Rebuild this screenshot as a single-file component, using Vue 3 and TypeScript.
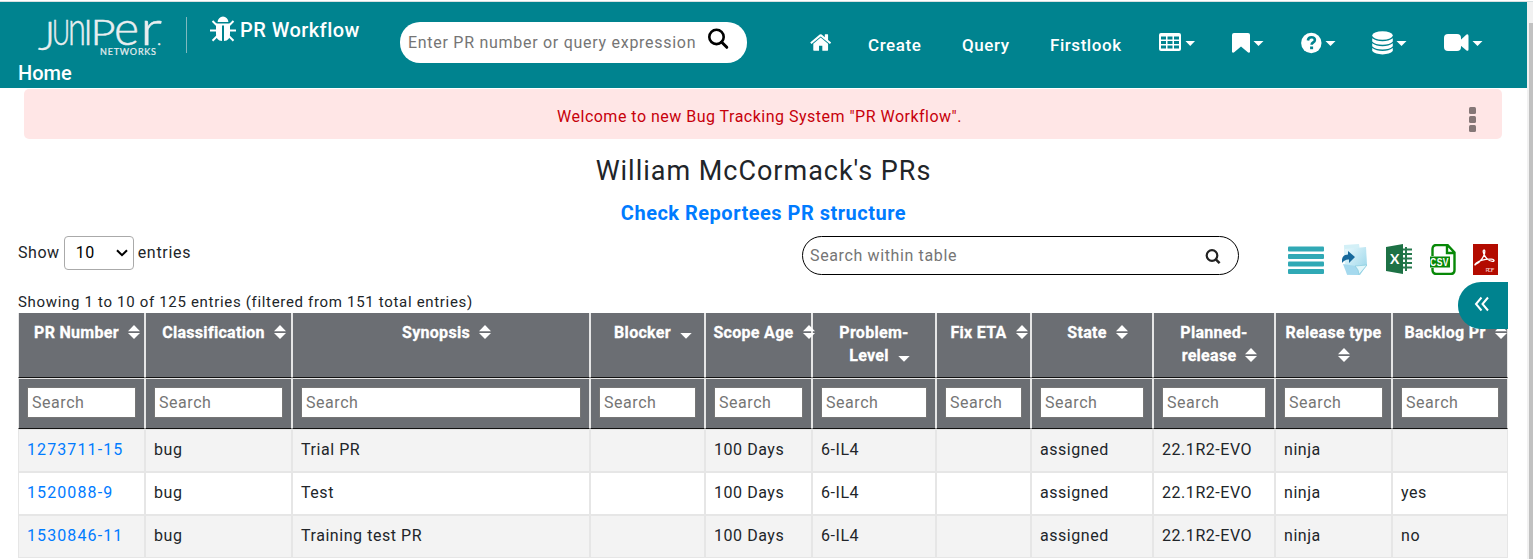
<script setup lang="ts">
interface Column {
  lines: string[]
  width: number
  sort: 'both' | 'desc'
}

interface PrRow {
  id: string
  cells: string[]
}

const columns: Column[] = [
  { lines: ['PR Number'], width: 127, sort: 'both' },
  { lines: ['Classification'], width: 147, sort: 'both' },
  { lines: ['Synopsis'], width: 298, sort: 'both' },
  { lines: ['Blocker'], width: 115, sort: 'desc' },
  { lines: ['Scope Age'], width: 107, sort: 'both' },
  { lines: ['Problem-', 'Level'], width: 124, sort: 'desc' },
  { lines: ['Fix ETA'], width: 95, sort: 'both' },
  { lines: ['State'], width: 122, sort: 'both' },
  { lines: ['Planned-', 'release'], width: 122, sort: 'both' },
  { lines: ['Release type', ''], width: 117, sort: 'both' },
  { lines: ['Backlog Pr'], width: 116, sort: 'both' },
]

const rows: PrRow[] = [
  { id: '1273711-15', cells: ['bug', 'Trial PR', '', '100 Days', '6-IL4', '', 'assigned', '22.1R2-EVO', 'ninja', ''] },
  { id: '1520088-9', cells: ['bug', 'Test', '', '100 Days', '6-IL4', '', 'assigned', '22.1R2-EVO', 'ninja', 'yes'] },
  { id: '1530846-11', cells: ['bug', 'Training test PR', '', '100 Days', '6-IL4', '', 'assigned', '22.1R2-EVO', 'ninja', 'no'] },
]
</script>

<template>
  <div class="page">
    <div class="main">
      <header class="header">
        <div class="bar">
          <svg class="logo" width="130" height="42" viewBox="0 0 130 42">
            <g fill="#e9eef0" stroke="#e9eef0" stroke-width=".5" font-family="Lato, sans-serif" font-weight="300">
              <text x="-1" y="36" font-size="40" textLength="17" lengthAdjust="spacingAndGlyphs">J</text>
              <text x="13" y="31" font-size="35" textLength="18" lengthAdjust="spacingAndGlyphs">U</text>
              <text x="29" y="31" font-size="48" textLength="18" lengthAdjust="spacingAndGlyphs">n</text>
              <text x="44.500" y="31" font-size="35">I</text>
              <text x="51.500" y="31" font-size="35" textLength="25" lengthAdjust="spacingAndGlyphs">P</text>
              <text x="75" y="31" font-size="47" textLength="25" lengthAdjust="spacingAndGlyphs">e</text>
              <text x="101" y="31" font-size="48" textLength="22" lengthAdjust="spacingAndGlyphs">r</text>
              <text x="118" y="31" font-size="18">.</text>
              <text x="61" y="40.500" font-size="9" stroke-width=".2" font-weight="400" textLength="56">NETWORKS</text>
            </g>
          </svg>
          <span class="divider"></span>
          <svg class="bug" width="26" height="26" viewBox="0 0 26 26">
            <path d="M7.600 6a5.400 5.400 0 0 1 10.800 0z" fill="#fff" />
            <path d="M6 7.500h14v10.500q0 6.500-6 7V9.500h-2V25q-6-.5-6-7z" fill="#fff" />
            <path d="M2.500 5l4.500 4.500M23.500 5L19 9.500M0 14.500h7M26 14.500h-7M2.500 24.800l5-5M23.500 24.800l-5-5" fill="none" stroke="#fff" stroke-width="2" />
          </svg>
          <span class="product">PR Workflow</span>
          <div class="search">
            <span class="search-text">Enter PR number or query expression</span>
            <svg class="search-icon" width="22" height="22" viewBox="0 0 22 22" fill="none" stroke="#000">
              <circle cx="9.500" cy="8.900" r="7.200" stroke-width="2.600" />
              <path d="M14.500 14l5.300 5.300" stroke-width="3" stroke-linecap="round" />
            </svg>
          </div>
          <nav class="nav">
            <svg width="23" height="23" viewBox="0 0 1792 1792" class="home-icon">
              <path fill="#fff" d="M1408 992v480q0 26-19 45t-45 19h-384v-384h-256v384h-384q-26 0-45-19t-19-45v-480q0-1 .5-3t.5-3l575-474 575 474q1 2 1 6zm223-69l-62 74q-8 9-21 11h-3q-13 0-21-7l-692-577-692 577q-12 8-24 7-13-2-21-11l-62-74q-8-10-7-23.500t11-21.500l719-599q32-26 76-26t76 26l244 204v-195q0-14 9-23t23-9h192q14 0 23 9t9 23v408l219 182q10 8 11 21.500t-7 23.500z" />
            </svg>
            <a class="link">Create</a>
            <a class="link">Query</a>
            <a class="link">Firstlook</a>
            <span class="menu">
              <svg width="37" height="24" viewBox="0 0 37 24" fill="#fff">
                <path fill-rule="evenodd" d="M2 3h18q2 0 2 2v14q0 2-2 2H2q-2 0-2-2V5q0-2 2-2zM2 6.500v3h5v-3zM8.500 6.500v3h5v-3zM15 6.500v3h5v-3zM2 11v3h5v-3zM8.500 11v3h5v-3zM15 11v3h5v-3zM2 15.500v3h5v-3zM8.500 15.500v3h5v-3zM15 15.500v3h5v-3z" />
                <path d="M26.500 11h9.500l-4.750 5z" />
              </svg>
            </span>
            <span class="menu">
              <svg width="37" height="24" viewBox="0 0 37 24" fill="#fff">
                <path d="M2 3h14q2 0 2 2v17q-1 1.500-2.500 0L9 16.500 2.500 22q-1.500 1.500-2.500 0V5q0-2 2-2z" />
                <path d="M21.500 11h10l-5 5z" />
              </svg>
            </span>
            <span class="menu">
              <svg width="37" height="24" viewBox="0 0 37 24" fill="#fff">
                <circle cx="10.300" cy="13" r="10.200" />
                <path d="M6.900 10.500q.4-3.200 3.600-3.200 3.400 0 3.400 2.700 0 1.600-1.800 2.500-1.500.8-1.500 2.300" fill="none" stroke="#00838f" stroke-width="2.600" />
                <rect x="9.100" y="16.500" width="3" height="2.700" fill="#00838f" />
                <path d="M24.500 11h10l-5 5z" />
              </svg>
            </span>
            <span class="menu">
              <svg width="37" height="26" viewBox="0 0 37 26" fill="#fff">
                <ellipse cx="10.500" cy="5.500" rx="10.300" ry="4.200" />
                <path d="M.2 8.300q4 3 10.300 3t10.300-3v3.200q-3 3.300-10.300 3.300T.2 11.500zM.2 13.300q4 3 10.300 3t10.300-3v3q-3 3.300-10.300 3.300T.2 16.300zM.2 18.100q4 3 10.300 3t10.300-3v3q-3 3.300-10.300 3.300T.2 21.100z" />
                <path d="M24.500 11h10l-5 5z" />
              </svg>
            </span>
            <span class="menu">
              <svg width="39" height="24" viewBox="0 0 39 24" fill="#fff">
                <rect x="0" y="4" width="17" height="17" rx="4" />
                <path d="M16 10.500l6.500-6q2-.8 2 1.500v13.500q0 2-2 1L16 15z" />
                <path d="M28.500 11h10l-5 5z" />
              </svg>
            </span>
          </nav>
        </div>
        <div class="crumb">Home</div>
      </header>

      <div class="alert">
        <span class="alert-text">Welcome to new Bug Tracking System "PR Workflow".</span>
        <span class="dots"><i></i><i></i><i></i></span>
      </div>

      <h1 class="title">William McCormack's PRs</h1>
      <a class="structure">Check Reportees PR structure</a>

      <div class="tools">
        <div class="length">
          <span class="label show">Show</span>
          <span class="select"><span class="label">10</span>
            <svg width="12" height="8" viewBox="0 0 12 8" fill="none" stroke="#000" stroke-width="2"><path d="M1 1.200l5 5 5-5" /></svg>
          </span>
          <span class="label">entries</span>
        </div>
        <div class="table-search">
          <span>Search within table</span>
          <svg width="16" height="16" viewBox="0 0 16 16" fill="none" stroke="#222">
            <circle cx="7" cy="7.500" r="5.300" stroke-width="2.200" />
            <path d="M10.800 11.300l3.800 3.800" stroke-width="2.500" />
          </svg>
        </div>
        <div class="exports">
          <svg width="36" height="32" viewBox="0 0 36 32" fill="#30a9b5">
            <rect y="2.500" width="36" height="5" rx="1" /><rect y="10" width="36" height="5" rx="1" />
            <rect y="17.500" width="36" height="5" rx="1" /><rect y="25" width="36" height="5" rx="1" />
          </svg>
          <svg width="25" height="31" viewBox="0 0 25 31">
            <defs>
              <linearGradient id="sheet" x1="0" y1="0" x2="1" y2="1">
                <stop offset="0" stop-color="#eaf9fd" /><stop offset="1" stop-color="#93d3e8" />
              </linearGradient>
            </defs>
            <path d="M2 1L17 0l3 21-17 4z" fill="#d3f0f7" />
            <path d="M3 5l21-2 1 18-7 10H5z" fill="url(#sheet)" />
            <path d="M1 20l4 10.500 12 .5 3-8z" fill="#a5d9ee" />
            <path d="M13 22l12-1-8 9.500q0-5-4-8.500z" fill="#e2f7fb" stroke="#86cbdc" stroke-width=".7" />
            <path d="M0 19q-1-8.500 6-8.500V7l7 6-6 6v-3.500q-4-.5-7 3.500z" fill="#17699c" />
          </svg>
          <svg width="26" height="30" viewBox="0 0 26 30">
            <path d="M15 3.500h10.500v24H15z" fill="#fff" />
            <path d="M16 5.500h10M16 10h10M16 14.500h10M16 19h10M16 23.500h10M20 3v24" stroke="#27794e" stroke-width="2" />
            <path d="M0 3l17-3v30L0 27z" fill="#1d7145" />
            <text x="4" y="20" fill="#fff" font-size="14" font-weight="700" font-family="Lato, sans-serif" letter-spacing="0">X</text>
          </svg>
          <svg width="26" height="31" viewBox="0 0 26 31">
            <path d="M2.500 12V5q0-4 4-4h11l7 7.500V26q0 4-4 4h-14q-4 0-4-4v-2M17 1v8h7.500" fill="none" stroke="#078807" stroke-width="2.400" />
            <rect x="0" y="12.500" width="20" height="11" fill="#078807" />
            <text x="0" y="22" fill="#fff" font-size="10" font-weight="700" font-family="Liberation Sans, sans-serif" textLength="19" lengthAdjust="spacingAndGlyphs">CSV</text>
          </svg>
          <svg width="25" height="31" viewBox="0 0 25 31">
            <rect width="25" height="31" fill="#b30b00" />
            <path d="M2.500 20.500c5-2.500 9.500-9 9.300-13.300-.1-2-2-1.500-1.500.8 1 5 5.500 9.500 9.500 9.300 2 0 1.500-2-1-2.100-6-.3-12 1.200-15.500 3.800-2 1.600-1.600 2.600-.8 1.500z" fill="none" stroke="#fff" stroke-width="1.300" />
            <text x="12.500" y="27.500" fill="#f4c9c6" font-size="6" font-family="Lato, sans-serif" textLength="9.500">PDF</text>
          </svg>
        </div>
      </div>

      <div class="info">Showing 1 to 10 of 125 entries (filtered from 151 total entries)</div>

      <div class="table-wrap">
        <table class="table">
          <colgroup>
            <col v-for="c in columns" :key="c.lines[0]" :style="{ width: c.width + 'px' }" />
          </colgroup>
          <thead>
            <tr class="heads">
              <th v-for="c in columns" :key="c.lines[0]">
                <div v-for="(line, i) in c.lines" :key="i" class="head-line">
                  <span>{{ line }}</span>
                  <svg v-if="i === c.lines.length - 1" class="sort" width="12" height="14" viewBox="0 0 12 14">
                    <path v-if="c.sort === 'both'" d="M0 6.300L6 0l6 6.300z" />
                    <path v-if="c.sort === 'both'" d="M0 7.900h12L6 14z" />
                    <path v-else d="M.3 8h11.400L6 13.800z" />
                  </svg>
                </div>
              </th>
            </tr>
            <tr class="filters">
              <th v-for="c in columns" :key="c.lines[0]"><div class="filter">Search</div></th>
            </tr>
          </thead>
          <tbody>
            <tr v-for="row in rows" :key="row.id">
              <td><a class="pr">{{ row.id }}</a></td>
              <td v-for="(cell, i) in row.cells" :key="i">{{ cell }}</td>
            </tr>
          </tbody>
        </table>
        <div class="drawer">
          <svg width="16" height="16" viewBox="0 0 16 16" fill="none" stroke="#fff" stroke-width="2"><path d="M7.500 1.500L2 8l5.500 6.500M14 1.500L8.500 8l5.500 6.500" /></svg>
        </div>
      </div>
    </div>
    <div class="scrollbar"><div class="thumb"></div></div>
  </div>
</template>

<style>
body {
  margin: 0;
  overflow: hidden;
  background: #fff;
}
</style>

<style scoped>
.page {
  display: flex;
  height: 559px;
  overflow: hidden;
  box-sizing: border-box;
  border-top: 1px solid #fff;
  font: 16px/23px Roboto, "Liberation Sans", sans-serif;
  letter-spacing: 0.55px;
  color: #212529;
  white-space: nowrap;
}
.page svg {
  display: block;
  flex: none;
}
.main {
  width: 1527px;
  height: 558px;
  overflow: hidden;
  border-top: 1px solid #d8dfe0;
  box-sizing: border-box;
}
.scrollbar {
  width: 6px;
  height: 558px;
  background: #f1f1f1;
  border-top: 1px solid #d8dfe0;
  box-sizing: border-box;
}
.thumb {
  height: 540px;
  margin: 21px 0 0 2px;
  background: #c1c1c1;
}
.header {
  height: 86px;
  background: #00838f;
  color: #fff;
}
.bar {
  display: grid;
  grid-template-columns: 147px 24px 30px 160px 347px 1fr;
  height: 61px;
  padding-left: 39px;
  align-items: start;
}
.page .logo {
  margin-top: 12px;
  overflow: visible;
  letter-spacing: 0;
}
.divider {
  width: 1px;
  height: 36px;
  margin-top: 15px;
  background: #7fb9bf;
}
.bug {
  margin-top: 14px;
}
.product {
  margin-top: 16px;
  font-size: 20px;
  line-height: 25px;
  font-weight: 500;
  letter-spacing: 0.45px;
}
.search {
  display: flex;
  justify-content: space-between;
  box-sizing: border-box;
  width: 347px;
  height: 41px;
  margin-top: 20px;
  padding: 9px 18px 0 8px;
  border-radius: 20px;
  background: #fff;
  color: #757575;
}
.search-text {
  letter-spacing: 0.72px;
}
.search-icon {
  margin-top: -3px;
}
.nav {
  display: grid;
  grid-template-columns: 58px 94px 88px 109px 73px 69px 71px 72px 60px;
  margin: 29px 0 0 63px;
}
.menu {
  margin-top: -1px;
}
.link {
  margin-top: 3px;
  font-size: 17px;
  font-weight: 500;
}
.crumb {
  padding-left: 18px;
  margin-top: -2px;
  font-size: 20px;
  line-height: 25px;
  font-weight: 500;
  letter-spacing: 0;
}
.alert {
  display: flex;
  justify-content: center;
  position: relative;
  height: 50px;
  margin: 1px 25px 0 24px;
  border-radius: 5px;
  background: #ffe6e6;
  color: #c7000b;
}
.alert-text {
  margin: 16px 7px 0 0;
  letter-spacing: 0.49px;
}
.dots {
  position: absolute;
  right: 26px;
  top: 18px;
  display: grid;
  gap: 2px;
}
.dots i {
  width: 7px;
  height: 7px;
  border-radius: 1.5px;
  background: #857777;
}
.title {
  margin: 16px 0 0;
  text-align: center;
  font-size: 27px;
  line-height: 32px;
  font-weight: 400;
  letter-spacing: 0.98px;
}
.structure {
  display: block;
  margin-top: 14px;
  text-align: center;
  font-size: 20px;
  line-height: 24px;
  font-weight: 700;
  letter-spacing: 0.5px;
  color: #007bff;
}
.tools {
  display: grid;
  grid-template-columns: 784px 486px 1fr;
  align-items: start;
  height: 50px;
  margin: 11px 0 0 18px;
}
.length {
  display: flex;
  gap: 4px;
  align-items: center;
  height: 34px;
}
.label {
  padding-bottom: 2px;
  letter-spacing: 0.7px;
}
.show {
  letter-spacing: 0.55px;
}
.select {
  display: flex;
  align-items: center;
  justify-content: space-between;
  box-sizing: border-box;
  width: 70px;
  height: 34px;
  padding: 0 5px 0 11px;
  border: 1px solid #aaa;
  border-radius: 4px;
  color: #000;
}
.table-search {
  display: flex;
  justify-content: space-between;
  align-items: center;
  box-sizing: border-box;
  width: 437px;
  height: 39px;
  padding: 0 17px 0 7px;
  border: 1px solid #000;
  border-radius: 20px;
  color: #757575;
  letter-spacing: 0.63px;
}
.exports {
  display: grid;
  grid-template-columns: 54px 44px 44px 43px 25px;
  margin-top: 8px;
}
.info {
  height: 23px;
  padding-top: 1px;
  box-sizing: border-box;
  margin: 4px 0 0 18px;
  font-size: 15px;
  line-height: 23px;
  letter-spacing: 0.68px;
}
.table-wrap {
  position: relative;
  width: 1490px;
  margin-left: 18px;
}
.table {
  width: 1490px;
  table-layout: fixed;
  border-collapse: separate;
  border-spacing: 0;
}
th,
td {
  box-sizing: border-box;
  border: 1px solid #e6e6e6;
  text-align: left;
}
th {
  padding: 8px;
  background: #6b6e73;
  border-bottom-color: #111;
}
.heads th {
  height: 65px;
  padding: 8px 0;
  vertical-align: top;
  color: #fff;
  border-top: 0;
}
.head-line {
  position: relative;
  z-index: 1;
  display: flex;
  justify-content: center;
  align-items: center;
  height: 23px;
  letter-spacing: 0.3px;
  -webkit-text-stroke: 0.3px #fff;
}
.sort {
  margin: -1px -11px 0 9px;
  fill: #fff;
}
.filters th {
  height: 51px;
  padding: 8px 8px 10px;
}
.filter {
  box-sizing: border-box;
  height: 31px;
  padding: 3px 4px;
  border: 1px solid #767676;
  background: #fff;
  color: #757575;
  font-weight: 400;
}
td {
  height: 43px;
  padding: 0 8px 2px;
}
tbody tr:nth-child(odd) td {
  background: #f3f3f3;
}
.pr {
  color: #007bff;
  letter-spacing: 1.1px;
}
.drawer {
  position: absolute;
  z-index: 2;
  top: -31px;
  right: 0;
  display: flex;
  align-items: center;
  box-sizing: border-box;
  width: 50px;
  height: 47px;
  padding: 0 0 3px 16px;
  border-radius: 23px 0 0 23px;
  background: #00838f;
}
</style>
